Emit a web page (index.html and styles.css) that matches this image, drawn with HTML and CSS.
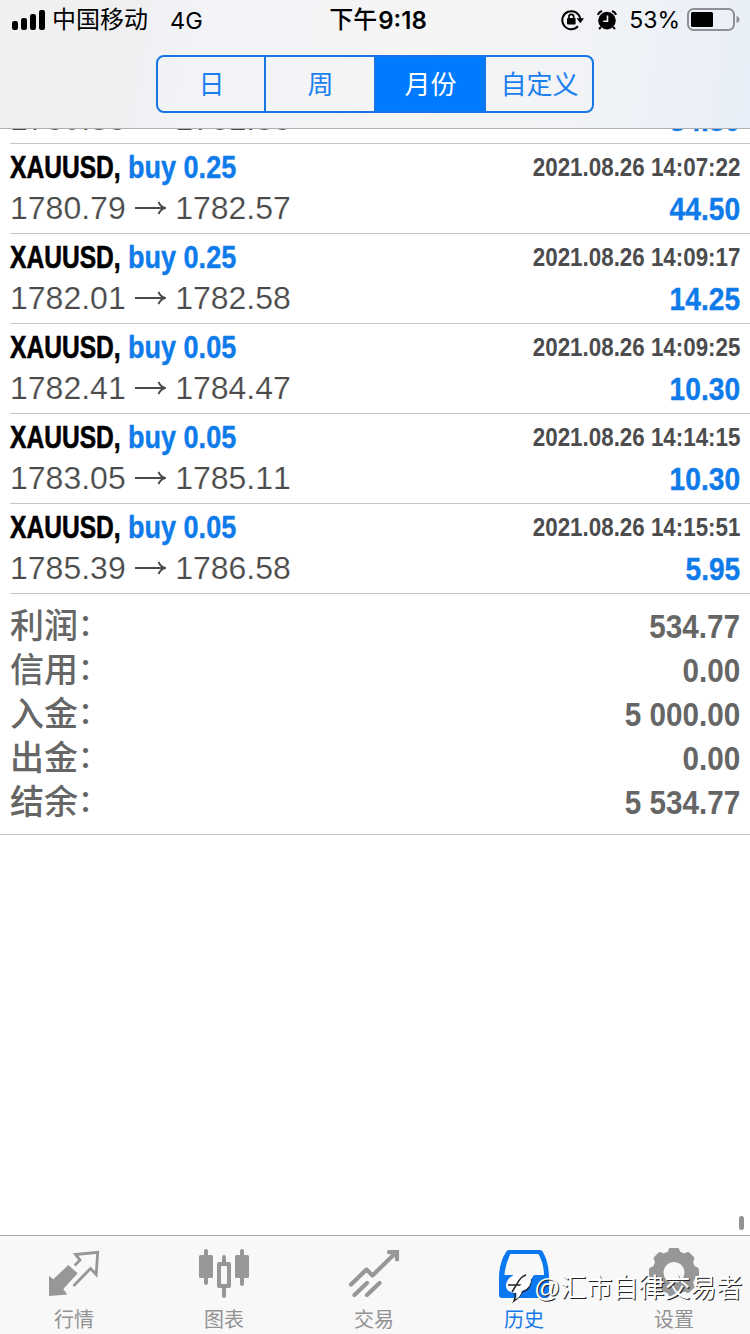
FILE: index.html
```html
<!DOCTYPE html>
<html lang="zh-CN">
<head>
<meta charset="utf-8">
<title>历史</title>
<link rel="stylesheet" href="styles.css">
</head>
<body>
<div class="screen">
  <header class="header">
    <div class="status">
      <div class="status-left">
        <svg class="signal" width="34" height="20" viewBox="0 0 34 20"><rect x="0" y="11" width="6" height="9" rx="2.2"/><rect x="9" y="8" width="6" height="12" rx="2.2"/><rect x="18" y="4" width="6" height="16" rx="2.2"/><rect x="27" y="0" width="6" height="20" rx="2.2"/></svg>
        <span class="carrier">中国移动</span><span class="network">4G</span>
      </div>
      <div class="clock"><span>下午</span><b>9:18</b></div>
      <div class="status-right">
        <svg width="23" height="22" viewBox="0 0 23 22"><path d="M16.9 17.3A9 9 0 1 1 19.200 10" fill="none" stroke="#000" stroke-width="2"/><path d="M15.6 9.2h7.4l-3.7 5z"/><rect x="6" y="9" width="8.600" height="6.500" rx="1"/><path d="M7.900 10V7.800a2.400 2.400 0 0 1 4.800 0V10" fill="none" stroke="#000" stroke-width="1.6"/></svg>
        <svg class="alarm" width="20" height="20" viewBox="0 0 20 20"><circle cx="10" cy="10.6" r="8.8"/><path d="M.8 4.8A7 7 0 0 1 5 1M19.200 4.800A7 7 0 0 0 15 1M4 17l-2 2M16 17l2 2" fill="none" stroke="#000" stroke-width="2"/><path d="M10.500 5.500V11.200H6.300" fill="none" stroke="#f4f5f8" stroke-width="1.600"/></svg>
        <span class="percent">53%</span>
        <svg class="battery" width="54" height="24" viewBox="0 0 54 24"><rect x="1" y="1" width="46" height="21" rx="5.500" fill="none" stroke="#8f9093" stroke-width="2"/><rect x="4" y="4" width="22" height="15" rx="1.500"/><path d="M49.500 8q3 1 3 3.500t-3 3.500z" fill="#8f9093"/></svg>
      </div>
    </div>
    <nav class="segments">
      <span class="segment">日</span><span class="segment">周</span><span class="segment on">月份</span><span class="segment">自定义</span>
    </nav>
  </header>

  <main class="content">
    <section class="deals">
      <article class="deal scrolled"><div class="bottom"><span class="price">1780.38<svg class="arrow" viewBox="0 0 32 16"><path d="M1 8H30M24.500 2Q26.500 6.500 31 8Q26.500 9.500 24.500 14"/></svg>1781.38</span><span class="profit">34.80</span></div></article>
      <article class="deal"><div class="top"><span class="name"><span class="symbol">XAUUSD, </span><span class="side">buy 0.25</span></span><time class="time">2021.08.26 14:07:22</time></div><div class="bottom"><span class="price">1780.79<svg class="arrow" viewBox="0 0 32 16"><path d="M1 8H30M24.500 2Q26.500 6.500 31 8Q26.500 9.500 24.500 14"/></svg>1782.57</span><span class="profit">44.50</span></div></article>
      <article class="deal"><div class="top"><span class="name"><span class="symbol">XAUUSD, </span><span class="side">buy 0.25</span></span><time class="time">2021.08.26 14:09:17</time></div><div class="bottom"><span class="price">1782.01<svg class="arrow" viewBox="0 0 32 16"><path d="M1 8H30M24.500 2Q26.500 6.500 31 8Q26.500 9.500 24.500 14"/></svg>1782.58</span><span class="profit">14.25</span></div></article>
      <article class="deal"><div class="top"><span class="name"><span class="symbol">XAUUSD, </span><span class="side">buy 0.05</span></span><time class="time">2021.08.26 14:09:25</time></div><div class="bottom"><span class="price">1782.41<svg class="arrow" viewBox="0 0 32 16"><path d="M1 8H30M24.500 2Q26.500 6.500 31 8Q26.500 9.500 24.500 14"/></svg>1784.47</span><span class="profit">10.30</span></div></article>
      <article class="deal"><div class="top"><span class="name"><span class="symbol">XAUUSD, </span><span class="side">buy 0.05</span></span><time class="time">2021.08.26 14:14:15</time></div><div class="bottom"><span class="price">1783.05<svg class="arrow" viewBox="0 0 32 16"><path d="M1 8H30M24.500 2Q26.500 6.500 31 8Q26.500 9.500 24.500 14"/></svg>1785.11</span><span class="profit">10.30</span></div></article>
      <article class="deal"><div class="top"><span class="name"><span class="symbol">XAUUSD, </span><span class="side">buy 0.05</span></span><time class="time">2021.08.26 14:15:51</time></div><div class="bottom"><span class="price">1785.39<svg class="arrow" viewBox="0 0 32 16"><path d="M1 8H30M24.500 2Q26.500 6.500 31 8Q26.500 9.500 24.500 14"/></svg>1786.58</span><span class="profit">5.95</span></div></article>
    </section>
    <dl class="summary">
      <div class="total"><dt>利润<span class="colon">：</span></dt><dd>534.77</dd></div>
      <div class="total"><dt>信用<span class="colon">：</span></dt><dd>0.00</dd></div>
      <div class="total"><dt>入金<span class="colon">：</span></dt><dd>5 000.00</dd></div>
      <div class="total"><dt>出金<span class="colon">：</span></dt><dd>0.00</dd></div>
      <div class="total"><dt>结余<span class="colon">：</span></dt><dd>5 534.77</dd></div>
    </dl>
    <i class="scrollbar"></i>
  </main>

  <footer class="tabs">
    <div class="tab">
      <svg viewBox="0 0 52 52"><path d="M1 48V27.700L5.300 31.300L20.300 17L29.700 25.300L15.300 41L19.300 46.500z"/><path d="M26.700 17.500L32 12L27.500 6.500L49.700 4.300L48.200 26.500L42.500 20.500L25.500 38" fill="none" stroke="#979797" stroke-width="2.800"/></svg>
      <span>行情</span>
    </div>
    <div class="tab">
      <svg viewBox="0 0 52 52"><rect x="1" y="7" width="14" height="23" rx="1.500"/><rect x="6" y="1" width="4" height="36" rx="2"/><rect x="37" y="7" width="14" height="23" rx="1.500"/><rect x="42" y="1" width="4" height="37" rx="2"/><rect x="21" y="16" width="10" height="22" fill="none" stroke="#979797" stroke-width="4" stroke-linejoin="round"/><rect x="24" y="7" width="4" height="9" rx="2"/><rect x="24" y="38" width="4" height="12" rx="2"/></svg>
      <span>图表</span>
    </div>
    <div class="tab">
      <svg viewBox="0 0 52 52"><path d="M3 36.500L18.500 21.500L24.500 27.500L47.500 5M6.500 47L19 35M19 47L31.500 35" fill="none" stroke="#979797" stroke-width="4.200" stroke-linecap="round" stroke-linejoin="round"/><path d="M41 4.200H49V11.500" fill="none" stroke="#979797" stroke-width="4.200" stroke-linecap="round"/></svg>
      <span>交易</span>
    </div>
    <div class="tab active">
      <svg viewBox="0 0 52 52"><path fill-rule="evenodd" d="M11 2H42Q44 2 45 4Q51 15 51 30V47Q51 50 48 50H4Q1 50 1 47V30Q1 15 8 4Q9 2 11 2zM12.500 6Q7 16 6.500 27H15Q17 27 18 30Q20 35 26 35T34 30Q35 27 37 27H46Q46 16 40.500 6z"/></svg>
      <span>历史</span>
    </div>
    <div class="tab">
      <svg viewBox="-26 -24.500 52 52"><circle r="16" fill="none" stroke="#979797" stroke-width="11"/><path d="M-8-19Q-6-20-5.500-22.500Q-5-25-2.500-25H2.500Q5-25 5.500-22.500Q6-20 8-19V-14H-8z"/><path transform="rotate(45)" d="M-8-19Q-6-20-5.500-22.500Q-5-25-2.500-25H2.500Q5-25 5.500-22.500Q6-20 8-19V-14H-8z"/><path transform="rotate(90)" d="M-8-19Q-6-20-5.500-22.500Q-5-25-2.500-25H2.500Q5-25 5.500-22.500Q6-20 8-19V-14H-8z"/><path transform="rotate(135)" d="M-8-19Q-6-20-5.500-22.500Q-5-25-2.500-25H2.500Q5-25 5.500-22.500Q6-20 8-19V-14H-8z"/><path transform="rotate(180)" d="M-8-19Q-6-20-5.500-22.500Q-5-25-2.500-25H2.500Q5-25 5.500-22.500Q6-20 8-19V-14H-8z"/><path transform="rotate(225)" d="M-8-19Q-6-20-5.500-22.500Q-5-25-2.500-25H2.500Q5-25 5.500-22.500Q6-20 8-19V-14H-8z"/><path transform="rotate(270)" d="M-8-19Q-6-20-5.500-22.500Q-5-25-2.500-25H2.500Q5-25 5.500-22.500Q6-20 8-19V-14H-8z"/><path transform="rotate(315)" d="M-8-19Q-6-20-5.500-22.500Q-5-25-2.500-25H2.500Q5-25 5.500-22.500Q6-20 8-19V-14H-8z"/></svg>
      <span>设置</span>
    </div>
  </footer>

  <div class="watermark">
    <svg width="30" height="32" viewBox="0 0 30 32"><path d="M8 4Q16-1 22 3Q17 5 15 10H22Q20 20 11 21Q3 21 2 14Q2 8 8 4z" fill="#fff"/><path d="M4 13H22M22 3Q17 4 13 12L8 20M27 7Q27 18 18 20Q16 25 10 29Q12 25 11 21" fill="none" stroke="#222" stroke-width="1.500"/><path d="M18 11Q24 10 27 5Q28 16 18 19Q17 24 12 27Q13 23 12 20z" fill="#fff"/></svg>
    <span>@汇市自律交易者</span>
  </div>
</div>
</body>
</html>
```
FILE: styles.css
```css
* { box-sizing: border-box; }

body {
  margin: 0;
  font-family: "Liberation Sans", "Noto Sans CJK SC", sans-serif;
  font-kerning: none;
}

.screen {
  position: relative;
  display: flex;
  flex-direction: column;
  width: 750px;
  height: 1334px;
  overflow: hidden;
  background: #fff;
}

.header {
  flex: none;
  height: 128px;
  background: linear-gradient(100deg, #f1f1f2 0%, #efeff1 15%, #f3f4f8 28%, #f5f5f6 55%, #f3f4f6 72%, #e9eff8 100%);
}

.status {
  display: grid;
  grid-template-columns: 1fr auto 1fr;
  align-items: center;
  height: 40px;
  padding: 0 9px 0 12px;
}

.status-left,
.status-right,
.clock {
  display: flex;
  align-items: center;
}

.status-right { justify-content: flex-end; }
.carrier { margin-left: 6px; font-size: 24px; line-height: 30px; }
.network { margin-left: 22px; font: 23.500px Inter, sans-serif; }
.clock { padding-left: 3px; font-size: 24px; font-weight: 500; line-height: 30px; }
.clock b { margin-left: 1px; font: 600 24px Inter, sans-serif; }
.alarm { margin-left: 13px; }
.percent { margin: 0 7px 0 12px; font: 23px Inter, sans-serif; }

.segments {
  display: grid;
  grid-template-columns: 106px 110px 110px 108px;
  width: 438px;
  height: 58px;
  margin: 15px auto 0;
  overflow: hidden;
  border: 2px solid #1577e6;
  border-radius: 8px;
}

.segment {
  display: flex;
  align-items: center;
  justify-content: center;
  padding: 0 0 4px 1px;
  font-size: 26px;
  color: #1a80f0;
}

.segment + .segment { border-left: 2px solid #1577e6; }
.segment.on { background: #007aff; color: #fff; }

.content {
  position: relative;
  flex: 1;
  border-top: 1px solid #b0b0b2;
}

.deal {
  height: 90px;
  margin-left: 10px;
  padding-right: 10px;
  border-bottom: 1px solid #c5c5c8;
}

/* Row that has scrolled under the header: only the foot of its last line shows. */
.deal.scrolled {
  display: flex;
  flex-direction: column;
  justify-content: flex-end;
  height: 15px;
  padding-bottom: 6px;
  overflow: hidden;
}

.top,
.bottom {
  display: flex;
  flex: none;
  justify-content: space-between;
  white-space: pre;
}

.top { line-height: 46px; }
.bottom { height: 36px; line-height: 36px; }

.name {
  display: flex;
  font-size: 32px;
  font-weight: bold;
}

.symbol {
  width: 117.500px;
  transform: scaleX(.768);
  transform-origin: left;
  -webkit-text-stroke: .6px;
}

.side {
  color: #0f7bea;
  transform: scaleX(.845);
  transform-origin: left;
  -webkit-text-stroke: .4px;
}

.time {
  font-size: 26px;
  font-weight: bold;
  color: #4c4c4e;
  transform: scaleX(.86);
  transform-origin: right;
}

.price {
  display: flex;
  align-items: center;
  height: 36px;
  font-size: 32px;
  line-height: 36px;
  color: #4a4a4a;
  -webkit-text-stroke: .2px #fff;
}

.arrow {
  width: 32px;
  height: 16px;
  margin: 0 9.500px 0 8px;
  fill: none;
  stroke: #4a4a4a;
  stroke-width: 1.900;
}

.profit {
  padding-top: 1px;
  font-size: 32px;
  font-weight: bold;
  color: #0f7bea;
  transform: scaleX(.88);
  transform-origin: right;
  -webkit-text-stroke: .4px;
}

.summary {
  margin: 0;
  padding: 10px 10px;
  border-bottom: 1px solid #c5c5c8;
}

.total {
  display: flex;
  justify-content: space-between;
  height: 44px;
  font-size: 34px;
  line-height: 44px;
  color: #666;
}

.total dt { font-weight: 500; }

.colon {
  font-size: 30px;
  line-height: 1;
  vertical-align: 3px;
}

.total dd {
  margin: 0;
  font-weight: bold;
  transform: scaleX(.873);
  transform-origin: right;
}

.scrollbar {
  position: absolute;
  right: 6px;
  bottom: 5px;
  width: 5px;
  height: 14px;
  border-radius: 3px;
  background: #949494;
}

.tabs {
  display: grid;
  grid-template-columns: repeat(5, 150px);
  flex: none;
  height: 99px;
  margin-left: -1px;
  border-top: 1px solid #adadad;
  background: #f8f8f8;
}

.tab {
  display: flex;
  flex-direction: column;
  align-items: center;
  padding-top: 12px;
  font-size: 20px;
  line-height: 28px;
  color: #929292;
  fill: #979797;
}

.tab svg { width: 52px; height: 52px; }
.tab span { margin-top: 6px; }
.tab.active { color: #147ae8; fill: #0c78f0; }

.watermark {
  position: absolute;
  left: 504px;
  top: 1272px;
  display: flex;
  align-items: center;
  font-size: 26px;
  line-height: 32px;
  white-space: nowrap;
  color: #fff;
  text-shadow: 1px 1px 0 #222;
}
```
